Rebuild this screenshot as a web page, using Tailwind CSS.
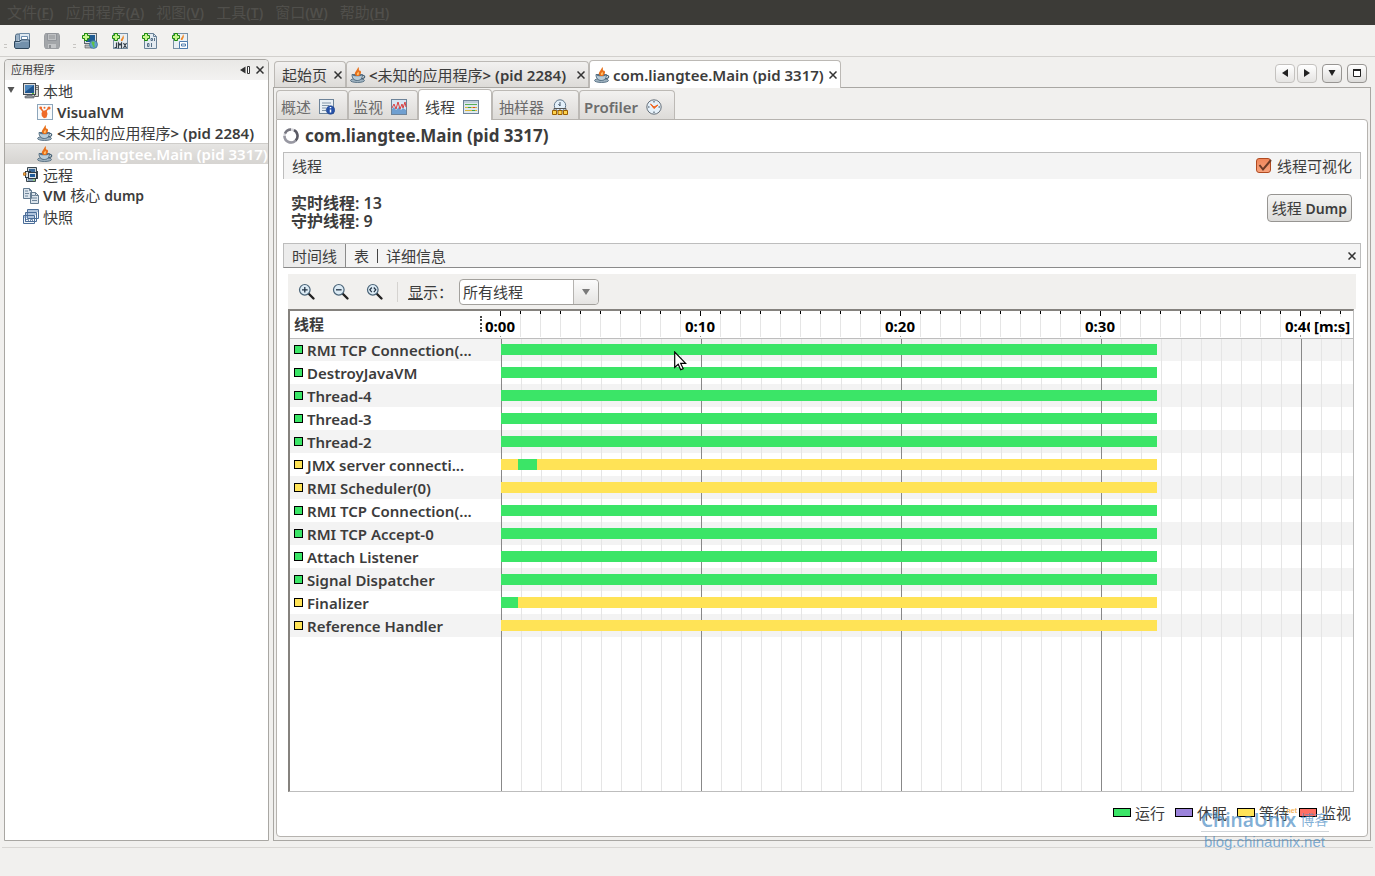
<!DOCTYPE html>
<html lang="zh-CN">
<head>
    <meta charset="UTF-8">
    <meta name="viewport" content="width=device-width, initial-scale=1.0">
    <title>VisualVM</title>
    <!-- Tailwind CSS -->
    <script src="https://cdn.jsdelivr.net/npm/@tailwindcss/browser@4"></script>
</head>
<body class="relative h-screen flex flex-col overflow-hidden bg-[#f1f0ee] text-[#3c3c3c] text-[15px] leading-5 font-['Noto_Sans','Noto_Sans_CJK_SC',sans-serif]">
    <!-- Icon sprites -->
    <svg class="hidden">
        <symbol id="java" viewBox="0 0 16 16">
            <ellipse cx="7.5" cy="13.5" rx="7" ry="2" fill="#9fb2c0" stroke="#4a6478" stroke-width=".8"/>
            <path d="M2 7.500h10.500c0 3.500-1.700 6-5.200 6S2 11 2 7.500z" fill="#b9ccd8" stroke="#486377" stroke-width=".9"/>
            <path d="M12.300 8.500c3-.6 3.700 2.700-1 3.300" fill="none" stroke="#486377" stroke-width="1.200"/>
            <ellipse cx="7.300" cy="8" rx="4.800" ry="1.300" fill="#587287"/>
            <path d="M6.500 9C2.500 6.500 7 4 8.200 0c1.300 1.500.3 2.500.8 3.500C11.500 3 12 6.500 8.800 9z" fill="#e8701a"/>
            <path d="M7.300 8c-1.300-1.500.8-2.500 1-3.500 1 1.500.7 2.500.2 3.500z" fill="#ffc06a"/>
        </symbol>
        <symbol id="computer" viewBox="0 0 16 16">
            <path d="M11.500 2.500h4v11h-4z" fill="#d8d8d0" stroke="#666" />
            <path d="M13 4.500h2M13 6.500h2" stroke="#777"/>
            <rect x=".5" y=".5" width="12" height="11" fill="#ddd" stroke="#444b50"/>
            <rect x="2" y="2" width="9" height="8" fill="#1f568f"/>
            <path d="M2 2h9L2 9z" fill="#4c86bd"/>
            <path d="M9 10.500h2" stroke="#5ec030"/>
            <path d="M4 12h5v1h2v2H2v-2h2z" fill="#8b9094" stroke="#5b6064" stroke-width=".6"/>
        </symbol>
        <symbol id="remote" viewBox="0 0 16 16">
            <path d="M4.500 .5h9v5h-9zM3.500 10.500h9v4h-9z" fill="#c9d2d9" stroke="#3b464e"/>
            <path d="M6 2h6v3H6z" fill="#38699a"/>
            <rect x="2.500" y="4.500" width="5" height="6" fill="#dfe4e8" stroke="#2f3b44"/>
            <rect x="5.500" y="5.500" width="8" height="6" fill="#dfe4e8" stroke="#2f3b44"/>
            <rect x="7" y="7" width="5" height="3" fill="#1f5c9a"/>
            <path d="M14.500 4v8" stroke="#3b464e"/>
            <circle cx="1.500" cy="7" r="1.500" fill="#f0a040" stroke="#86500f" stroke-width=".7"/>
            <path d="M5 13h5" stroke="#38699a"/><path d="M10 13h2" stroke="#5b3"/>
        </symbol>
        <symbol id="coredump" viewBox="0 0 16 16">
            <path d="M.5 .5h6l2 2v8h-8zM7.500 4.500h5l3 3v8h-8z" fill="#dbe4ec" stroke="#647b90"/>
            <path d="M2 3h3M2 5.500h4M2 8h3M9 7.500h3M9 10h5M9 12.500h5" stroke="#71879c"/>
            <path d="M12.500 4.500v3h3M6.500 .5v2h2" fill="none" stroke="#647b90"/>
        </symbol>
        <symbol id="snapshot" viewBox="0 0 16 16">
            <path d="M4.500 .5h11v9h-11zM2.500 3.500h11v9h-11zM.5 6.500h11v8H.5z" fill="#f4f8fb" stroke="#4b6d98"/>
            <path d="M5 2h10M3 5h10M1 8h10" stroke="#6c8fbd"/>
            <path d="M2.500 10.500h3v2h-3zM7.500 10.500h2v2h-2z" fill="none" stroke="#4b6d98" stroke-width=".8"/>
        </symbol>
        <symbol id="plus" viewBox="0 0 8 8">
            <path d="M2.500 .5h3v2h2v3h-2v2h-3v-2h-2v-3h2z" fill="#c9f58f" stroke="#1c8a0d"/>
        </symbol>
        <symbol id="magnifier" viewBox="0 0 18 18">
            <path d="M10.500 10.500l5 5" stroke="#222" stroke-width="2.400" stroke-linecap="round"/>
            <circle cx="6.800" cy="6.800" r="5.300" fill="#dcebf5" stroke="#4a6478" stroke-width="1.200"/>
        </symbol>
        <symbol id="close" viewBox="0 0 8 8">
            <path d="M.5 .5l7 7M7.500 .5l-7 7" stroke="#333" stroke-width="1.500"/>
        </symbol>
    </svg>

    <!-- Menu bar -->
    <nav class="h-[25px] shrink-0 flex items-center gap-3 px-[7px] bg-[#3c3b37] text-[#504f4b]">
        <button>文件<span class="text-sm font-semibold">(<u>F</u>)</span></button>
        <button>应用程序<span class="text-sm font-semibold">(<u>A</u>)</span></button>
        <button>视图<span class="text-sm font-semibold">(<u>V</u>)</span></button>
        <button>工具<span class="text-sm font-semibold">(<u>T</u>)</span></button>
        <button>窗口<span class="text-sm font-semibold">(<u>W</u>)</span></button>
        <button>帮助<span class="text-sm font-semibold">(<u>H</u>)</span></button>
    </nav>

    <!-- Toolbar -->
    <div class="h-8 shrink-0 flex items-center gap-[14px] pl-[4px] border-b border-[#d2d0cd] bg-[#f2f1ef]">
        <span class="w-[3px] h-[4px] mt-[10px] -mr-[7px] border-y border-[#c8c6c3]"></span>
        <button aria-label="打开"><svg class="size-4" viewBox="0 0 16 16">
            <path d="M1.500 14V2.500l1-1.500h3l1 2" fill="#9cb2c6" stroke="#4d667d"/>
            <path d="M5.500 .5h10v10h-10z" fill="#dfe9f1" stroke="#6f8ba5"/><path d="M7.500 3.500h6v3h-6z" fill="#fff" stroke="#6b8db0"/>
            <path d="M.5 14V8.500h5l1.500-1.500h8.500V14l-1 1.500h-13z" fill="#7391ac" stroke="#2e475d"/>
            <path d="M1.500 9.500h4.500l1.500-1.500h7" fill="none" stroke="#a9bfd2"/>
        </svg></button>
        <button aria-label="保存" disabled><svg class="size-4" viewBox="0 0 16 16">
            <path d="M.5 2.500l1-2h13l1 2v11l-1 2h-13l-1-2z" fill="#a3a6a9" stroke="#9a9da1"/>
            <path d="M3.500 .5h9v7h-9z" fill="#bfc1c3" stroke="#92959a"/><path d="M5 3h6M5 5h6" stroke="#8e9194"/>
            <path d="M4 11h8v4H4z" fill="#c2c4c6"/><path d="M5 12h2v3H5z" fill="#8e9194"/>
        </svg></button>
        <span class="w-[3px] h-[4px] mt-[10px] -ml-px -mr-2 border-y border-[#c8c6c3]"></span>
        <button aria-label="添加 JMX 主机"><svg class="size-4" viewBox="0 0 16 16">
            <rect x="2.500" y=".5" width="12" height="10" fill="#dfe3e6" stroke="#5b656b"/><rect x="4" y="2" width="9" height="7" fill="#1f5c93"/><path d="M3 12h7v3H3z" fill="#b5babd" stroke="#555" stroke-width=".6"/>
            <circle cx="11.500" cy="11.500" r="4" fill="#5f9fd0" stroke="#3a6d8c" stroke-width=".7"/><path d="M9.500 9c2-1 4 0 3 1.500s1 1.500 0 4c-2 0-1-2-2.500-3z" fill="#5fc04a"/>
            <use href="#plus" width="8" height="8"/>
        </svg></button>
        <button aria-label="添加 JMX 连接"><svg class="size-4" viewBox="0 0 16 16">
            <rect x="1.500" y=".5" width="14" height="15" fill="#e8eef2" stroke="#7890a5"/>
            <path d="M9 8c-1-2 2-3 2-6 2 3 0 4-.5 6z" fill="#f08a2c"/>
            <path d="M4.500 9.500v5h-2M6.500 15.500V10L8 12l1.500-2v5.500M11.500 10l3 5M14.500 10l-3 5" fill="none" stroke="#333e48" stroke-width="1.200"/>
            <use href="#plus" width="8" height="8"/>
        </svg></button>
        <button aria-label="添加核心 dump"><svg class="size-4" viewBox="0 0 16 16">
            <path d="M2.500 .5h9l3 3v12h-12z" fill="#e4ebf1" stroke="#6a8298"/><path d="M11.500 .5v3h3" fill="none" stroke="#6a8298"/>
            <path d="M9 5.500h1.500v2H9zM12.500 5v3M5.500 10.500H7v3H5.500zM9.500 10v4" fill="none" stroke="#566f86"/>
            <use href="#plus" width="8" height="8"/>
        </svg></button>
        <button aria-label="添加快照"><svg class="size-4" viewBox="0 0 16 16">
            <rect x="1.500" y=".5" width="14" height="15" fill="#eaf0f4" stroke="#7890a5"/>
            <path d="M9 7c-1-2 2-3 2-6 2 3 0 4-.5 6z" fill="#f08a2c"/>
            <path d="M7.500 8.500h8v7h-8z" fill="#fff" stroke="#4f7cae"/><path d="M9.500 11h4v2h-4z" fill="none" stroke="#4f7cae"/>
            <use href="#plus" width="8" height="8"/>
        </svg></button>
    </div>

    <main class="flex-1 min-h-0 flex gap-1 pt-[2px] pb-[6px] pl-1 pr-[4px]">
        <!-- Applications tree -->
        <aside class="w-[265px] shrink-0 flex flex-col border border-[#a9a7a3] rounded-t bg-white">
            <header class="h-5 shrink-0 flex items-center pl-[6px] pr-1 rounded-t bg-linear-to-b from-[#e9e8e6] to-[#f3f2f1] text-[11px]">
                <span class="flex-1">应用程序</span>
                <button aria-label="最小化" class="mr-[6px]"><svg class="w-[10px] h-2" viewBox="0 0 10 8"><path d="M5.500 .5v7L0 4z" fill="#333"/><path d="M7.500 .5h2v7h-2z" fill="#fff" stroke="#333"/></svg></button>
                <button aria-label="关闭"><svg class="size-2"><use href="#close"/></svg></button>
            </header>
            <ul>
                <li class="h-[21px] flex items-center pl-[2px]"><svg class="w-2 h-[7px] mr-2" viewBox="0 0 8 7"><path d="M.5 0h7L4 6z" fill="#555"/></svg><svg class="size-4 mr-1"><use href="#computer"/></svg>本地</li>
                <li class="h-[21px] flex items-center pl-8 font-semibold">
                    <svg class="size-4 mr-1" viewBox="0 0 16 16"><rect x=".5" y=".5" width="15" height="15" fill="#f7fafc" stroke="#8da6bb"/><path d="M6 7l3-1 2-2 .8 1-2 2 .7 3-1 3.500-2.500.8L4.800 12l-.3-3z" fill="#ee6a28"/><path d="M3.500 4l3 4" stroke="#ee6a28" stroke-width="1.500"/><circle cx="12" cy="4" r="1.600" fill="#ee6a28"/><circle cx="3.700" cy="3.800" r="1.400" fill="#ee6a28"/><circle cx="7.500" cy="3.800" r="1" fill="#ee6a28"/></svg>VisualVM</li>
                <li class="h-[21px] flex items-center pl-8 font-semibold"><svg class="size-4 mr-1"><use href="#java"/></svg><span>&lt;<span class="font-normal">未知的应用程序</span>&gt; (pid 2284)</span></li>
                <li class="h-[21px] flex items-center pl-8 font-semibold whitespace-nowrap border-t border-[#cfcdca] bg-linear-to-b from-[#e6e5e3] to-[#d6d4d1] text-white"><svg class="size-4 mr-1 shrink-0"><use href="#java"/></svg>com.liangtee.Main (pid 3317)</li>
                <li class="h-[21px] flex items-center pl-[18px]"><svg class="size-4 mr-1"><use href="#remote"/></svg>远程</li>
                <li class="h-[21px] flex items-center pl-[18px] font-semibold"><svg class="size-4 mr-1"><use href="#coredump"/></svg><span>VM <span class="font-normal">核心</span> <span class="text-sm">dump</span></span></li>
                <li class="h-[21px] flex items-center pl-[18px]"><svg class="size-4 mr-1"><use href="#snapshot"/></svg>快照</li>
            </ul>
        </aside>

        <section class="flex-1 min-w-0 flex flex-col">
            <!-- Document tabs -->
            <div class="h-7 shrink-0 flex items-end ml-px whitespace-nowrap">
                <button class="w-[72px] h-[26px] shrink-0 flex items-center gap-[7px] pl-[7px] border border-b-0 border-[#bcb9b5] rounded-t bg-linear-to-b from-[#f2f1f0] to-[#dddbd8]">起始页<svg class="size-2"><use href="#close"/></svg></button>
                <button class="w-[243px] h-[26px] shrink-0 flex items-center pl-[3px] border border-b-0 border-[#bcb9b5] rounded-t bg-linear-to-b from-[#f2f1f0] to-[#dddbd8] font-semibold"><svg class="size-4 mr-[3px]"><use href="#java"/></svg><span>&lt;<span class="font-normal">未知的应用程序</span>&gt; (pid 2284)</span><svg class="size-2 ml-auto mr-[3px]"><use href="#close"/></svg></button>
                <button class="w-[252px] h-7 shrink-0 flex items-center pl-1 -mb-px border border-b-0 border-[#bcb9b5] rounded-t bg-white font-semibold z-10"><svg class="size-4 mr-[3px]"><use href="#java"/></svg>com.liangtee.Main (pid 3317)<svg class="size-2 ml-auto mr-[3px]"><use href="#close"/></svg></button>
                <div class="ml-auto mr-[4px] self-center flex items-center">
                    <button aria-label="上一个" class="w-5 h-[19px] grid place-items-center border border-[#c4c2bf] rounded bg-linear-to-b from-white to-[#e5e4e2]"><svg class="size-2" viewBox="0 0 8 8"><path d="M7 0v8L1 4z" fill="#222"/></svg></button>
                    <button aria-label="下一个" class="w-5 h-[19px] ml-[2px] grid place-items-center border border-[#c4c2bf] rounded bg-linear-to-b from-white to-[#e5e4e2]"><svg class="size-2" viewBox="0 0 8 8"><path d="M1 0v8l6-4z" fill="#222"/></svg></button>
                    <button aria-label="文档列表" class="w-5 h-[19px] ml-[5px] grid place-items-center border border-[#979592] rounded bg-linear-to-b from-white to-[#dddcda]"><svg class="size-2" viewBox="0 0 8 8"><path d="M.5 1h7L4 7z" fill="#222"/></svg></button>
                    <button aria-label="最大化" class="w-5 h-[19px] ml-[5px] grid place-items-center border border-[#979592] rounded bg-linear-to-b from-white to-[#dddcda]"><svg class="size-2" viewBox="0 0 8 8"><path d="M.5 1.500h7v6h-7z" fill="#fff" stroke="#222"/><path d="M0 1h8" stroke="#222" stroke-width="2"/></svg></button>
                </div>
            </div>

            <div class="flex-1 min-h-0 flex flex-col pt-[2px] px-[2px] pb-[3px] border border-[#a9a7a3]">
                <!-- View tabs -->
                <div class="h-[29px] shrink-0 flex items-end whitespace-nowrap text-[#6c6c6c]">
                    <button class="w-[72px] h-[29px] flex items-center gap-2 pl-1 pt-1 border border-b-0 border-[#bcb9b5] rounded-t bg-linear-to-b from-[#f2f1f0] to-[#dddbd8]">概述
                        <svg class="size-4" viewBox="0 0 16 16"><rect x=".5" y=".5" width="14" height="14" fill="#eaf0f5" stroke="#6d8399"/><path d="M3 4h9M3 6.500h7M3 9h4M3 11.500h4" stroke="#8195a8"/><circle cx="11.500" cy="11" r="4.300" fill="#2550a8" stroke="#163a80" stroke-width=".5"/><path d="M11.500 10.500v3M11.500 8v1.300" stroke="#fff" stroke-width="1.500"/></svg></button>
                    <button class="w-[70px] h-[29px] flex items-center gap-2 pl-1 pt-1 border border-b-0 border-[#bcb9b5] rounded-t bg-linear-to-b from-[#f2f1f0] to-[#dddbd8]">监视
                        <svg class="size-4" viewBox="0 0 16 16"><rect x=".5" y=".5" width="15" height="15" fill="#d8e6f3" stroke="#6d8399"/><path d="M1 10l2-2 2 3 3-3 2 3 2-2 3 2v4H1z" fill="#6f9fd0"/><path d="M1 9l2-4 2 5 2-7 2 7 2-5 1 4 2-6 1 5" fill="none" stroke="#d84040"/></svg></button>
                    <button class="w-[74px] h-[31px] -mb-px flex items-center gap-2 pl-[6px] pt-1 border border-b-0 border-[#bcb9b5] rounded-t bg-white text-[#3c3c3c] z-10">线程
                        <svg class="size-4" viewBox="0 0 16 16"><rect x=".5" y="1.500" width="15" height="13" fill="#dfe8ef" stroke="#6d8399"/><path d="M1 3h14" stroke="#9db2c6"/><path d="M2 5.500h12" stroke="#58ad55"/><path d="M2 8.500h12M2 11.500h12" stroke="#d9b63a"/><path d="M5 8.500h3M9 11.500h3" stroke="#39a54a"/><path d="M10 8.500h2" stroke="#e04030"/></svg></button>
                    <button class="w-[87px] h-[29px] flex items-center gap-2 pl-[6px] pt-1 border border-b-0 border-[#bcb9b5] rounded-t bg-linear-to-b from-[#f2f1f0] to-[#dddbd8]">抽样器
                        <svg class="size-4" viewBox="0 0 16 16"><circle cx="8" cy="6.500" r="5.700" fill="#e3f0fa" stroke="#62788c"/><path d="M8 3v4M6.500 5l1.500 2" fill="none" stroke="#456"/><path d="M2 11V9.500h12V11M8 9v2" fill="none" stroke="#555"/><path d="M.5 11.500h4v4h-4zM6 11.500h4v4H6zM11.500 11.500h4v4h-4z" fill="#ffd34d" stroke="#9b5f00"/></svg></button>
                    <button class="w-[96px] h-[29px] flex items-center gap-2 pl-1 pt-1 border border-b-0 border-[#bcb9b5] rounded-t bg-linear-to-b from-[#f2f1f0] to-[#dddbd8] font-semibold">Profiler
                        <svg class="size-4" viewBox="0 0 16 16"><circle cx="8" cy="8" r="7.200" fill="#e6f1fa" stroke="#66707a"/><path d="M8 2v1.500M8 12.500V14M2 8h1.500M12.500 8H14" stroke="#345"/><path d="M4.500 5L8 8l4-2-4 3.500z" fill="#f0641e" stroke="#f0641e"/></svg></button>
                </div>

                <div class="flex-1 min-h-0 flex flex-col px-[6px] border border-[#b6b3af] rounded-tr rounded-b bg-white">
                    <h1 class="h-8 shrink-0 flex items-center gap-[6px] text-[17px] font-bold">
                        <svg class="size-4" viewBox="0 0 16 16"><circle cx="8" cy="8" r="6.500" fill="none" stroke="#d5d5da" stroke-width="2.500"/><path d="M11 2.200a6.500 6.500 0 0 1 1.600 10.400" fill="none" stroke="#5a5a64" stroke-width="2.500"/><path d="M12.600 12.600A6.500 6.500 0 0 1 1.500 8" fill="none" stroke="#9898a2" stroke-width="2.500"/><path d="M2 5.500A6.500 6.500 0 0 1 8 1.500" fill="none" stroke="#75757f" stroke-width="2.500"/></svg>
                        com.liangtee.Main (pid 3317)
                    </h1>

                    <div class="h-[27px] shrink-0 flex items-center justify-between px-2 border border-b-0 border-[#bdbdbd] bg-[#f4f4f4]">
                        <h2>线程</h2>
                        <label class="flex items-center gap-[5px]">
                            <span class="relative size-4">
                                <input type="checkbox" checked class="block appearance-none size-[15px] border border-[#b04a20] rounded-[3px] bg-linear-to-b from-[#f0865a] to-[#f6a27c]">
                                <svg class="absolute inset-0 size-4 pointer-events-none" viewBox="0 0 16 16"><path d="M3.500 7l3.500 4.500L15 2" fill="none" stroke="#6b3a26" stroke-width="2"/></svg>
                            </span>
                            线程可视化
                        </label>
                    </div>

                    <div class="h-16 shrink-0 flex items-start justify-between pl-2 pr-[9px] pt-[15px]">
                        <p class="text-base leading-[18px] font-semibold">实时线程: 13<br>守护线程: 9</p>
                        <button class="h-7 px-1 border border-[#979592] rounded bg-linear-to-b from-[#f5f5f4] to-[#dcdbd9]">线程 <span class="text-sm font-semibold">Dump</span></button>
                    </div>

                    <!-- Timeline / table / details -->
                    <div class="h-[25px] shrink-0 flex items-stretch border border-b-[#8a8a8a] border-[#bdbdbd] bg-[#f4f4f4]">
                        <button class="w-[62px] border-r border-[#8a8a8a] bg-[#ececec]">时间线</button>
                        <button class="pl-2 pr-2">表</button>
                        <span class="w-px h-[14px] self-center bg-[#444]"></span>
                        <button class="pl-2">详细信息</button>
                        <button aria-label="关闭" class="ml-auto mr-[4px]"><svg class="size-2"><use href="#close"/></svg></button>
                    </div>

                    <div class="h-[35px] shrink-0 flex items-center mt-[6px] mx-[5px] pl-[10px] bg-[#f1f0ee]">
                        <button aria-label="放大" class="mr-4"><svg class="size-[18px]" viewBox="0 0 18 18"><use href="#magnifier"/><path d="M4 6.800h5.600M6.800 4v5.600" stroke="#234" stroke-width="1.300"/></svg></button>
                        <button aria-label="缩小" class="mr-4"><svg class="size-[18px]" viewBox="0 0 18 18"><use href="#magnifier"/><path d="M4 6.800h5.600" stroke="#234" stroke-width="1.300"/></svg></button>
                        <button aria-label="适合窗口"><svg class="size-[18px]" viewBox="0 0 18 18"><use href="#magnifier"/><path d="M5.800 4.500L3.800 6.800l2 2.300M7.800 4.500l2 2.300-2 2.300" fill="none" stroke="#234" stroke-width="1.200"/></svg></button>
                        <span class="w-px h-5 ml-[13px] mr-[10px] bg-[#d5d3d0]"></span>
                        <label for="filter" class="w-[51px]"><u>显</u>示：</label>
                        <div class="relative">
                            <select id="filter" class="block appearance-none w-[140px] h-[26px] pl-[3px] border border-[#a3a19d] rounded bg-white text-[#3c3c3c]">
                                <option>所有线程</option>
                            </select>
                            <span class="absolute right-px top-px w-[25px] h-6 grid place-items-center border-l border-[#b5b3b0] rounded-r bg-linear-to-b from-[#fbfbfb] to-[#e5e4e2] pointer-events-none"><svg class="w-2 h-[6px]" viewBox="0 0 8 6"><path d="M0 0h8L4 6z" fill="#7a7a7a"/></svg></span>
                        </div>
                    </div>

                    <div class="flex-1 min-h-0 flex mx-[5px] mr-[7px] border-2 border-r border-b border-t-[#85827e] border-l-[#85827e] border-[#bdbdbd]">
                        <table class="table-fixed w-full h-full border-collapse">
                            <thead>
                                <tr class="h-[27px] border-b border-[#bdbdbd]">
                                    <th class="w-[211px] p-0 pl-1 text-left font-semibold">
                                        <div class="flex items-center justify-between pr-[19px]">线程<span class="h-4 border-l-2 border-dotted border-[#444]"></span></div>
                                    </th>
                                    <th class="p-0 text-black font-bold">
                                        <!-- Minor ticks every second, major ones every ten -->
                                        <div class="-ml-px bg-[repeating-linear-gradient(90deg,#000_0_1px,transparent_1px_20px),repeating-linear-gradient(90deg,#e5e5e5_0_1px,transparent_1px_20px)] bg-[length:100%_3px,100%_100%] bg-no-repeat">
                                            <div class="h-[26px] flex items-center pt-1 bg-[repeating-linear-gradient(90deg,#000_0_1px,transparent_1px_200px),repeating-linear-gradient(90deg,#888_0_1px,transparent_1px_200px)] bg-[length:100%_5px,100%_3px] bg-[position:0_0,0_100%] bg-no-repeat">
                                                <div class="w-[115px] -ml-[15px] shrink-0 leading-[18px] text-left"><span class="bg-white">0:00</span></div>
                                                <div class="w-[200px] shrink-0 leading-[18px]"><span class="bg-white">0:10</span></div>
                                                <div class="w-[200px] shrink-0 leading-[18px]"><span class="bg-white">0:20</span></div>
                                                <div class="w-[200px] shrink-0 leading-[18px]"><span class="bg-white">0:30</span></div>
                                                <div class="flex-1 min-w-0 pl-[85px] overflow-hidden leading-[18px] text-left"><span class="bg-white">0:40</span></div>
                                                <div class="w-[43px] shrink-0 pl-1 leading-[18px] bg-white text-left">[m:s]</div>
                                            </div>
                                        </div>
                                    </th>
                                </tr>
                            </thead>
                            <tbody id="threads">
                                <tr>
                                    <td></td>
                                    <td class="bg-[repeating-linear-gradient(90deg,#888_0_1px,transparent_1px_200px),repeating-linear-gradient(90deg,#e5e5e5_0_1px,transparent_1px_20px)]"></td>
                                </tr>
                            </tbody>
                        </table>
                    </div>

                    <!-- Legend -->
                    <div class="h-11 shrink-0 flex items-center justify-end gap-[10px] pr-[10px] pb-[3px]">
                        <span class="flex items-center gap-1"><i class="w-[18px] h-[9px] border border-black bg-[#3be567]"></i>运行</span>
                        <span class="flex items-center gap-1"><i class="w-[18px] h-[9px] border border-black bg-[#9b83db]"></i>休眠</span>
                        <span class="flex items-center gap-1"><i class="w-[18px] h-[9px] border border-black bg-[#ffe356]"></i>等待</span>
                        <span class="flex items-center gap-1"><i class="w-[18px] h-[9px] border border-black bg-[#ff6f62]"></i>监视</span>
                    </div>
                </div>
            </div>
        </section>
    </main>

    <!-- Status bar -->
    <footer class="h-[29px] shrink-0 mx-[2px] border-t border-[#d8d6d3]"></footer>

    <!-- Watermark -->
    <div class="absolute right-[46px] bottom-[25px] w-[128px] text-[#4a8cc4]/70 font-['Liberation_Sans','Noto_Sans_CJK_SC',sans-serif]">
        <div class="h-[23px] flex items-center gap-1 whitespace-nowrap border-b border-[#cfd4d8] font-['Noto_Sans','Noto_Sans_CJK_SC',sans-serif]"><span class="text-[19px] font-semibold">ChinaUnix</span><span class="text-sm">博客</span></div>
        <div class="pl-[3px] text-[15px] leading-[19px]">blog.chinaunix.net</div>
        <span class="absolute right-[32px] -top-[5px] text-[7px] leading-[14px] font-bold text-[#f2b35c]">.net</span>
    </div>

    <!-- Mouse pointer -->
    <svg class="absolute left-[674px] top-[351px] w-[13px] h-5" viewBox="0 0 13 20"><path d="M.7 1v15.500l3.500-3.200 2.500 5.500 2.500-1.200-2.500-5.200h5z" fill="#fff" stroke="#000" stroke-width="1.200"/></svg>

    <script>
        // Thread states: r = running, w = waiting; lengths in timeline pixels
        const threads = [
            ['RMI TCP Connection(...', [['r', 656]]],
            ['DestroyJavaVM', [['r', 656]]],
            ['Thread-4', [['r', 656]]],
            ['Thread-3', [['r', 656]]],
            ['Thread-2', [['r', 656]]],
            ['JMX server connecti...', [['w', 17], ['r', 19], ['w', 620]]],
            ['RMI Scheduler(0)', [['w', 656]]],
            ['RMI TCP Connection(...', [['r', 656]]],
            ['RMI TCP Accept-0', [['r', 656]]],
            ['Attach Listener', [['r', 656]]],
            ['Signal Dispatcher', [['r', 656]]],
            ['Finalizer', [['r', 17], ['w', 639]]],
            ['Reference Handler', [['w', 656]]]
        ];
        const colors = { r: 'bg-[#3be567]', w: 'bg-[#ffe356]' };

        const rows = threads.map(([name, states]) => {
            const last = states[states.length - 1][0];
            const bars = states.map(([s, len]) => `<div class="h-[11px] ${colors[s]}" style="width: ${len}px"></div>`).join('');
            return `<tr class="h-[23px] odd:bg-[#f3f3f3]">
                <td class="p-0 pl-1 whitespace-nowrap font-semibold"><div class="flex items-center gap-1"><i class="size-[9px] border border-black ${colors[last]}"></i>${name}</div></td>
                <td class="p-0 bg-[repeating-linear-gradient(90deg,#888_0_1px,transparent_1px_200px),repeating-linear-gradient(90deg,#e5e5e5_0_1px,transparent_1px_20px)]"><div class="flex">${bars}</div></td>
            </tr>`;
        }).join('');
        document.getElementById('threads').insertAdjacentHTML('afterbegin', rows);
    </script>
</body>
</html>
